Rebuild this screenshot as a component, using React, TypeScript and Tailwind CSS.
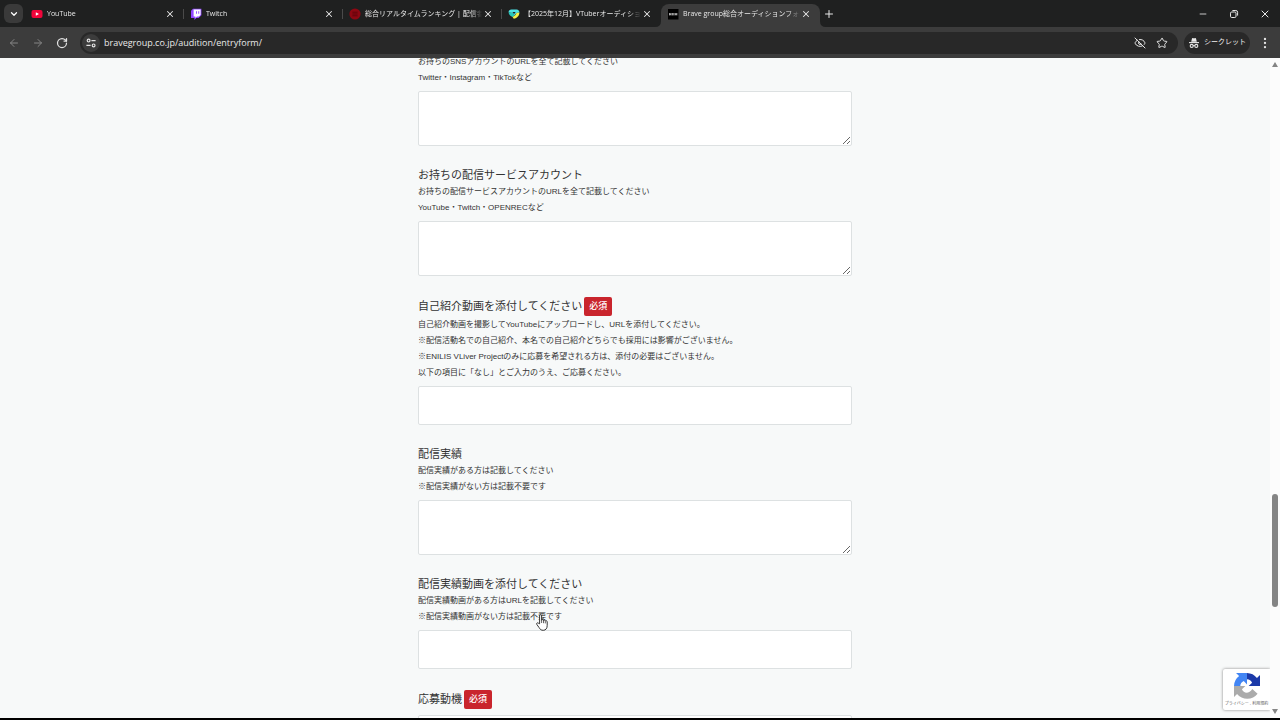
import { useState } from "react";
import type { ReactNode } from "react";
import {
  ArrowLeft,
  ArrowRight,
  ChevronDown,
  EllipsisVertical,
  EyeOff,
  Minus,
  Plus,
  RotateCw,
  Star,
  X,
} from "lucide-react";

type Tab = {
  id: string;
  titulo: string;
  icon: ReactNode;
};

type Field = {
  id: string;
  label?: string;
  required?: boolean;
  notes: string[];
  multiline?: boolean;
};

function YoutubeIcon() {
  return (
    <svg viewBox="0 0 12 12" className="size-3 shrink-0" aria-hidden="true">
      <rect x="0.5" y="2" width="11" height="8" rx="2" fill="#f0053a" />
      <path d="M4.8 4.2v3.6L8 6z" fill="#fff" />
    </svg>
  );
}

function TwitchIcon() {
  return (
    <svg viewBox="0 0 12 12" className="size-3 shrink-0" aria-hidden="true">
      <path d="M3 0.8h8.4v6.4L8.6 10H6.4L4.4 12V10H1V2.8z" fill="#9146ff" />
      <path d="M3.6 1.6h7v5.2L9 8.4H7L5.4 10V8.4H3.6z" fill="#fff" />
      <path d="M6 3.2h0.9v2.6H6zM8.3 3.2h0.9v2.6H8.3z" fill="#9146ff" />
    </svg>
  );
}

function RankingIcon() {
  return (
    <svg viewBox="0 0 12 12" className="size-3 shrink-0" aria-hidden="true">
      <circle cx="6" cy="6" r="5.6" fill="#8e0712" />
      <path d="M3.4 4.2h5.2M3.4 6h5.2M3.4 7.8h5.2" stroke="#5c040b" strokeWidth="0.9" />
    </svg>
  );
}

function AuditionIcon() {
  return (
    <svg viewBox="0 0 12 12" className="size-3 shrink-0" aria-hidden="true">
      <path d="M0.6 4.4C0.6 2.600 1.800 1.400 3.400 1.400h5.200c1.800 0 2.800 1.400 2.800 3L8.400 5 6.600 7.400 5 5z" fill="#4fe3e6" />
      <path d="M0.6 4.400L5 5l1.600 2.400-2 1.600C2.400 8.200 0.800 6.600 0.600 4.400z" fill="#25c9bb" />
      <path d="M4.400 4h3.200L6.200 6z" fill="#1f2020" />
      <path d="M11.400 4.400c0 3.200-2.200 5.600-5.600 6.400L4.400 8.800C6.600 8.200 8 6.600 8.400 5z" fill="#f3f04a" />
    </svg>
  );
}

function BraveIcon() {
  return (
    <svg viewBox="0 0 12 12" className="size-3 shrink-0" aria-hidden="true">
      <rect x="1" y="1" width="10.5" height="10.5" fill="#000" />
      <path d="M2.600 5v2.400M4 5v2.400M5.400 5v2.400M6.800 5v2.400M8.200 5v2.400M9.800 5v2.400M2.600 6.200H4M8.200 6.200h1.600" stroke="#ddd" strokeWidth="0.8" />
    </svg>
  );
}

function SiteSettingsIcon() {
  return (
    <svg viewBox="0 0 12 12" className="size-3" fill="none" stroke="#e3e3e3" strokeWidth="1.2" aria-hidden="true">
      <circle cx="3.6" cy="3.6" r="1.4" />
      <path d="M6.400 3.600h4.200M1.400 8.400h4.200" />
      <circle cx="8.6" cy="8.4" r="1.4" />
    </svg>
  );
}

function IncognitoIcon() {
  return (
    <svg viewBox="0 0 12 12" className="size-3" aria-hidden="true">
      <path d="M3.200 4.800L4 1.600c0.100-0.500 0.600-0.700 1-0.500l1 0.300 1-0.300c0.400-0.200 0.900 0 1 0.500l0.800 3.200z" fill="#e8e8e8" />
      <path d="M1 5.600h10" stroke="#e8e8e8" strokeWidth="1.1" />
      <g fill="none" stroke="#e8e8e8" strokeWidth="1.1">
        <circle cx="3.7" cy="8.9" r="1.5" />
        <circle cx="8.3" cy="8.9" r="1.5" />
        <path d="M5.200 8.700q0.800-0.500 1.600 0" />
      </g>
    </svg>
  );
}

function RestoreIcon() {
  return (
    <svg viewBox="0 0 10 10" className="size-2.5" fill="none" stroke="#e8e8e8" aria-hidden="true">
      <rect x="1.5" y="3" width="5.5" height="5.5" rx="1.2" />
      <path d="M3.400 1.500h3.400a1.800 1.800 0 0 1 1.800 1.800v3.300" />
    </svg>
  );
}

function RecaptchaIcon() {
  return (
    <svg viewBox="0 0 64 64" className="size-[26px]" aria-hidden="true">
      <path d="M64 32V5l-7.500 7.500A32 32 0 0 0 32 0v15.500c6 0 10 3 12.500 8.500L36 32z" fill="#1c3aa9" />
      <path d="M32 0H5l7.500 7.500A32 32 0 0 0 0 32h15.500c0-6 3-10 8.500-12.500L32 28z" fill="#4285f4" />
      <path d="M0 32v27l7.500-7.500A32 32 0 0 0 58 51L45 39.500C41 46 36 48.500 31 48.500c-5 0-9-3-11.500-8.500L28 32z" fill="#ababab" />
    </svg>
  );
}

function HandCursor() {
  return (
    <svg
      viewBox="0 0 12 17"
      className="pointer-events-none absolute top-[561px] left-[118px] h-[17px] w-3"
      aria-hidden="true"
    >
      <path
        d="M3.600 9.800V1.800c0-1.500 2-1.500 2 0v4.400c0.200-0.900 1.800-0.800 1.900 0.300 0.300-0.800 1.700-0.600 1.800 0.500 0.500-0.700 1.900-0.400 1.900 0.900v3.500c0 2.800-1.300 4.900-3.900 4.900-2.200 0-3.200-0.900-4.200-2.700L0.800 10.400c-0.700-1.300 0.700-2.100 1.600-1.200z"
        fill="#fff"
        stroke="#222"
        strokeWidth="0.9"
        strokeLinejoin="round"
      />
      <path d="M5.600 6v3M7.500 6.600v2.600M9.300 7.200v2.200" stroke="#222" strokeWidth="0.7" />
    </svg>
  );
}

const tabs: Tab[] = [
  { id: "youtube", titulo: "YouTube", icon: <YoutubeIcon /> },
  { id: "twitch", titulo: "Twitch", icon: <TwitchIcon /> },
  { id: "ranking", titulo: "総合リアルタイムランキング | 配信者", icon: <RankingIcon /> },
  { id: "vtuber", titulo: "【2025年12月】VTuberオーディショ", icon: <AuditionIcon /> },
  { id: "brave", titulo: "Brave group総合オーディションフォ", icon: <BraveIcon /> },
];

const fields: Field[] = [
  {
    id: "sns",
    notes: ["お持ちのSNSアカウントのURLを全て記載してください", "Twitter・Instagram・TikTokなど"],
    multiline: true,
  },
  {
    id: "streaming",
    label: "お持ちの配信サービスアカウント",
    notes: ["お持ちの配信サービスアカウントのURLを全て記載してください", "YouTube・Twitch・OPENRECなど"],
    multiline: true,
  },
  {
    id: "intro",
    label: "自己紹介動画を添付してください",
    required: true,
    notes: [
      "自己紹介動画を撮影してYouTubeにアップロードし、URLを添付してください。",
      "※配信活動名での自己紹介、本名での自己紹介どちらでも採用には影響がございません。",
      "※ENILIS VLiver Projectのみに応募を希望される方は、添付の必要はございません。",
      "以下の項目に「なし」とご入力のうえ、ご応募ください。",
    ],
  },
  {
    id: "results",
    label: "配信実績",
    notes: ["配信実績がある方は記載してください", "※配信実績がない方は記載不要です"],
    multiline: true,
  },
  {
    id: "results-video",
    label: "配信実績動画を添付してください",
    notes: ["配信実績動画がある方はURLを記載してください", "※配信実績動画がない方は記載不要です"],
  },
  { id: "motive", label: "応募動機", required: true, notes: [], multiline: true },
];

function TabStrip() {
  const [active, setActive] = useState("brave");

  return (
    <div className="flex h-[27px] shrink-0 items-center bg-[#1f2020] pl-1">
      <button
        type="button"
        aria-label="タブを検索"
        className="flex size-[19px] shrink-0 items-center justify-center rounded-md bg-[#3a3a3a] text-white"
      >
        <ChevronDown className="size-2.5" strokeWidth={3} />
      </button>
      <div className="flex min-w-0 items-end self-stretch pl-0.5">
        {tabs.map((t, i) => {
          const isActive = t.id === active;
          const divided = !isActive && tabs[i + 1]?.id !== active;
          return (
            <div
              key={t.id}
              className={
                isActive
                  ? "relative flex h-[23px] w-[159px] items-center rounded-t-lg bg-[#3c3c3c] pr-2 pb-1 pl-1.5"
                  : "relative flex h-[23px] w-[159px] items-center pr-2 pb-1 pl-1.5"
              }
            >
              {isActive && (
                <svg viewBox="0 0 171 6" className="absolute bottom-0 -left-1.5 h-1.5 w-[171px]" fill="#3c3c3c" aria-hidden="true">
                  <path d="M0 6q6 0 6-6v6zM171 6q-6 0-6-6v6z" />
                </svg>
              )}
              <button
                type="button"
                onClick={() => setActive(t.id)}
                className="flex min-w-0 flex-1 items-center gap-1 text-left text-[7px] leading-3 text-[#e8e8e8]"
              >
                {t.icon}
                <span className="min-w-0 flex-1 mask-r-from-90% whitespace-nowrap">{t.titulo}</span>
              </button>
              <button
                type="button"
                aria-label={`閉じる: ${t.titulo}`}
                className="flex size-3 shrink-0 items-center justify-center text-[#e8e8e8]"
              >
                <X className="size-2.5" strokeWidth={2.5} />
              </button>
              {divided && <span className="absolute right-0 h-2.5 w-px bg-[#4a4a4a]" />}
            </div>
          );
        })}
      </div>
      <button type="button" aria-label="新しいタブ" className="ml-[3px] flex size-3 items-center justify-center text-[#e8e8e8]">
        <Plus className="size-3" strokeWidth={2} />
      </button>
      <div className="ml-auto flex text-[#e8e8e8]">
        <button type="button" aria-label="最小化" className="flex h-5 w-[31px] items-center justify-center">
          <Minus className="size-2.5" />
        </button>
        <button type="button" aria-label="元に戻す" className="flex h-5 w-[31px] items-center justify-center">
          <RestoreIcon />
        </button>
        <button type="button" aria-label="閉じる" className="flex h-5 w-[31px] items-center justify-center">
          <X className="size-3" strokeWidth={2} />
        </button>
      </div>
    </div>
  );
}

function Toolbar() {
  return (
    <div className="flex h-[31px] shrink-0 items-center bg-[#3c3c3c] pr-2 pl-2">
      <div className="flex gap-3">
        <button type="button" aria-label="戻る" className="text-[#858585]">
          <ArrowLeft className="size-3" strokeWidth={2} />
        </button>
        <button type="button" aria-label="進む" className="text-[#858585]">
          <ArrowRight className="size-3" strokeWidth={2} />
        </button>
        <button type="button" aria-label="再読み込み" className="text-[#e3e3e3]">
          <RotateCw className="size-3" strokeWidth={2.5} />
        </button>
      </div>
      <div className="ml-3 flex h-[22px] min-w-0 flex-1 items-center rounded-full bg-[#282828] pr-2.5 pl-0.5 text-[#e3e3e3]">
        <button
          type="button"
          aria-label="サイト情報を表示"
          className="flex size-[18px] shrink-0 items-center justify-center rounded-full bg-[#3c3c3c]"
        >
          <SiteSettingsIcon />
        </button>
        <input
          type="text"
          aria-label="アドレス"
          defaultValue="bravegroup.co.jp/audition/entryform/"
          className="ml-1 min-w-0 flex-1 bg-transparent text-[9px] leading-4 text-[#e8e8e8] outline-none"
        />
        <button type="button" aria-label="サードパーティ Cookie をブロック中">
          <EyeOff className="size-3" strokeWidth={2} />
        </button>
        <button type="button" aria-label="ブックマーク" className="ml-2.5">
          <Star className="size-3" strokeWidth={2} />
        </button>
      </div>
      <button
        type="button"
        className="ml-1.5 flex h-[22px] w-[66px] items-center justify-center gap-1 rounded-full bg-[#282828] text-[7px] text-[#f0f0f0]"
      >
        <IncognitoIcon />
        シークレット
      </button>
      <button type="button" aria-label="メニュー" className="ml-2 text-[#e3e3e3]">
        <EllipsisVertical className="size-3.5" />
      </button>
    </div>
  );
}

function FormField({ field }: { field: Field }) {
  return (
    <div className="mb-5">
      {field.label && (
        <div className={field.required ? "flex h-5 items-center gap-0.5" : "flex h-[17px] items-center"}>
          <label htmlFor={field.id} className="text-[11px] leading-4">
            {field.label}
          </label>
          {field.required && (
            <span className="rounded-xs bg-[#c9252d] px-[5px] text-[9px] leading-[19px] font-medium text-white">
              必須
            </span>
          )}
        </div>
      )}
      <div className="pt-px pb-[5px]">
        {field.notes.map((note) => (
          <p key={note} className="text-[8px] leading-4">
            {note}
          </p>
        ))}
      </div>
      {field.multiline ? (
        <textarea
          id={field.id}
          aria-label={field.label ?? "SNSアカウント"}
          className="block h-[55px] w-full rounded-xs border border-[#dde1e2] bg-white p-2 text-[11px]"
        />
      ) : (
        <input
          id={field.id}
          type="text"
          className="block h-[39px] w-full rounded-xs border border-[#dde1e2] bg-white px-2 text-[11px]"
        />
      )}
    </div>
  );
}

export default function App() {
  return (
    <div className="flex h-screen flex-col overflow-hidden bg-black font-['Open_Sans','Noto_Sans_CJK_JP',sans-serif]">
      <TabStrip />
      <Toolbar />
      <div className="mb-0.5 flex min-h-0 flex-1 bg-[#fcfcfc]">
        <main className="relative min-w-0 flex-1 overflow-hidden bg-[#f7f9f9] font-['Liberation_Sans','Noto_Sans_CJK_JP',sans-serif] text-[#333]">
          {/* scrolled partway down, so the first field is cut by the top edge */}
          <form className="relative mx-auto -mt-[5px] w-full max-w-[434px]">
            {fields.map((f) => (
              <FormField key={f.id} field={f} />
            ))}
            <HandCursor />
          </form>
          <aside className="absolute right-0 bottom-2 flex h-[41px] w-[47px] flex-col items-center rounded-l-xs bg-white pt-1 shadow-[0_0_3px_#808080]">
            <RecaptchaIcon />
            <div className="mt-0.5 text-[4px] leading-[5px] whitespace-nowrap text-[#555]">
              <a href="#privacy">プライバシー</a> - <a href="#terms">利用規約</a>
            </div>
          </aside>
        </main>
        <div className="flex w-2.5 shrink-0 flex-col items-center justify-between py-1" aria-hidden="true">
          <svg viewBox="0 0 6 5" className="h-[5px] w-1.5" fill="#858585">
            <path d="M3 0l3 5H0z" />
          </svg>
          <div className="flex w-1.5 flex-1 flex-col">
            <div className="grow-[428]" />
            <div className="h-[113px] rounded-full bg-[#858585]" />
            <div className="grow-[102]" />
          </div>
          <svg viewBox="0 0 6 5" className="h-[5px] w-1.5" fill="#858585">
            <path d="M3 5l3-5H0z" />
          </svg>
        </div>
      </div>
    </div>
  );
}
